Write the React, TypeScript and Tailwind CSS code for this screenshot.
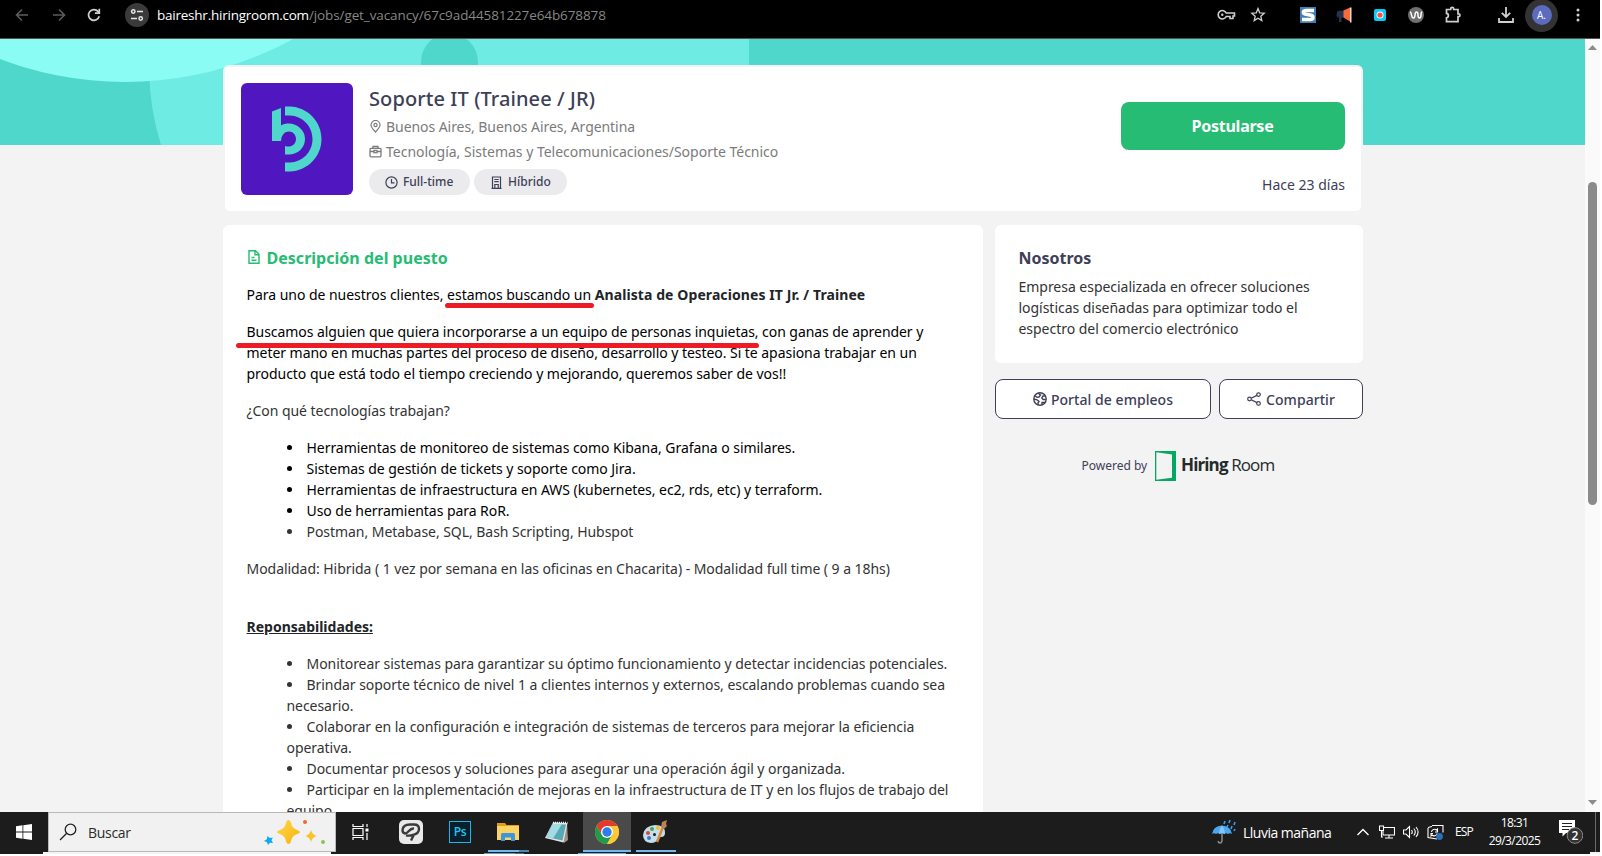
import React from "react";

function Toolbar() {
  return (
    <header className="flex h-[39px] items-start border-b border-[#5a4f4e] bg-black pt-[3px] font-['Open_Sans','Noto_Sans',sans-serif]">
      <div className="flex h-6 w-[620px] items-center pl-[14px]">
        <svg className="h-4 w-4 shrink-0" viewBox="0 0 16 16" fill="none" stroke="#5c5c5c" strokeWidth="1.6"><path d="M14 8H3M8 2.5 2.5 8 8 13.5" /></svg>
        <svg className="ml-[21px] h-4 w-4 shrink-0" viewBox="0 0 16 16" fill="none" stroke="#5c5c5c" strokeWidth="1.6"><path d="M2 8h11M8 2.5 13.500 8 8 13.500" /></svg>
        <svg className="ml-[19px] h-4 w-4 shrink-0" viewBox="0 0 16 16" fill="none" stroke="#d0d0d0" strokeWidth="1.7"><path d="M13.200 9.200A5.400 5.400 0 1 1 12 4.400l1 1.200" /><path d="M13.300 1.800v4.400H8.900" /></svg>
        <span className="ml-[23px] flex h-6 w-6 shrink-0 items-center justify-center rounded-full bg-[#3a3a3a]">
          <svg className="h-[14px] w-[14px]" viewBox="0 0 14 14" fill="none" stroke="#e6e6e6" strokeWidth="1.5"><circle cx="3.300" cy="3.500" r="1.700" /><path d="M7 3.500h6M1 10.500h6" /><circle cx="10.700" cy="10.500" r="1.700" /></svg>
        </span>
        <span className="ml-2 whitespace-nowrap text-[13.5px] leading-6 tracking-[-0.1px] text-[#868686]">
          <span className="tracking-[-0.23px] text-white">baireshr.hiringroom.com</span>/jobs/get_vacancy/67c9ad44581227e64b678878
        </span>
      </div>
      <div className="ml-auto flex h-6 items-center pr-[14px]">
        <svg className="mr-[14px] h-[12px] w-[19px]" viewBox="0 0 19 12" fill="none" stroke="#cfcfcf" strokeWidth="1.600"><path d="M9.200 4H17.500v3H16v2.500h-3V7.500H9.200A4.200 4.200 0 1 1 9.200 4Z" /><circle cx="5.300" cy="5.800" r="1.200" fill="#cfcfcf" stroke="none" /></svg>
        <svg className="mr-[34px] h-[16px] w-[16px]" viewBox="0 0 16 16" fill="none" stroke="#cfcfcf" strokeWidth="1.300"><path d="m8 1.600 1.700 4.200 4.500.4-3.400 3 1 4.400L8 11.300l-3.800 2.300 1-4.400-3.400-3 4.500-.4Z" /></svg>
        <svg className="mr-[20px] h-4 w-4" viewBox="0 0 16 16"><path fill="#3f7fb5" d="M0 0h16v16H0z" /><path d="M14 3.500H6.500Q3.300 3.500 3.300 5.300 3.300 7 6 7.400l4 .6q3 .4 3 2.400 0 2.100-3 2.100H2" fill="none" stroke="#fff" strokeWidth="3.400" /></svg>
        <svg className="mr-[22px] h-4 w-[16px]" viewBox="0 0 16 16"><path fill="#24344e" d="M1 5q0-1 2-1.200L8 3.500v7l-2.500.2V15H3v-4.500Q.5 10.500.5 8Z" /><path fill="#f96a3b" d="m7.500 3.500 6.500-3v14l-6.500-4Z" /><path fill="#e9ddd6" d="M14 .5h1.500v15H14z" /></svg>
        <svg className="mr-[22px] h-3 w-3" viewBox="0 0 12 12"><rect width="12" height="12" rx="2" fill="#08c9f7" /><circle cx="6" cy="6" r="3.500" fill="#fff" /><circle cx="6" cy="6" r="2.600" fill="#fb4f3f" /></svg>
        <svg className="mr-[20px] h-4 w-4" viewBox="0 0 16 16"><circle cx="8" cy="8" r="8" fill="#6f6f6f" /><path d="M2 5q1 0 1.500 3t2 3q1.300 0 1.500-3t1.500-3Q10 5 10 8t1.500 3q1.500 0 1.500-3t1.200-3" fill="none" stroke="#fff" strokeWidth="1.500" /></svg>
        <svg className="mr-[36px] h-[18px] w-[18px]" viewBox="0 0 18 18" fill="none" stroke="#cfcfcf" strokeWidth="1.700"><path d="M2.500 3.500h4.200v-.6a1.500 1.500 0 0 1 3 0v.6h4.300v4.300h.6a1.400 1.400 0 0 1 0 2.800H14v5H2.500v-3.800c2.500-.2 2.500-4.200 0-4.400Z" /></svg>
        <svg className="mr-[11px] h-4 w-4" viewBox="0 0 16 16" fill="none" stroke="#cfcfcf" strokeWidth="1.800"><path d="M8 0v9.500M3.800 5.800 8 10l4.200-4.200M1 11v4h14v-4" /></svg>
        <span className="-my-3 mr-[12px] flex h-[33px] w-[33px] items-center justify-center rounded-full bg-[#333333]">
          <span className="flex h-5 w-5 items-center justify-center rounded-full bg-[#5c6bc0] text-[10px] text-white">A.</span>
        </span>
        <svg className="h-4 w-4" viewBox="0 0 16 16" fill="#cfcfcf"><circle cx="8" cy="3" r="1.500" /><circle cx="8" cy="8" r="1.500" /><circle cx="8" cy="13" r="1.500" /></svg>
      </div>
    </header>
  );
}

function Banner() {
  return (
    <svg className="block h-[106px] w-[1585px]" viewBox="0 39 1585 106">
      <path fill="#50d7cc" d="M0 39h1585v106H0z" />
      <path fill="#6eece4" d="M149 39h600v106H161Q150 110 149 70Z" />
      <circle cx="449.500" cy="62" r="28.500" fill="#50d7cc" />
      <path fill="#50d7cc" d="M421 62h57v40h-57z" />
      <circle cx="125" cy="-268" r="350" fill="#8afcf4" />
    </svg>
  );
}

function Company() {
  return (
    <svg className="h-28 w-28 rounded-md" viewBox="0 0 112 112">
      <path fill="#5017c0" d="M0 0h112v112H0z" />
      <g fill="#50d7cc">
        <path d="M44 23.500h5C66 24 80.500 38 80.500 56S66 88 49 88.500h-5v-9h5c12-.5 22.500-10 22.500-23.500S61 33 49 32.500h-5Z" />
        <path d="M31 28.500 40 25v17.500C42 41 45 40.500 48 40.500c8 0 16 6.500 16 15.500S56.500 71.500 48 71.500h-4v-8.500c6 2 11-1.500 11-7 0-4-3-7.500-7-7.500s-7.500 3-8 9.500h-9Z" />
      </g>
    </svg>
  );
}

function JobHeader() {
  return (
    <section className="flex h-[146px] w-[1140px] rounded-md border-2 border-b-0 border-[#f3f3f3] bg-white pl-4 pt-4">
      <Company />
      <div className="ml-4 whitespace-nowrap text-sm text-[#7b7b7b]">
        <h1 className="mt-[2px] h-[27px] text-[20px] font-medium leading-[27px] tracking-[0.09px] text-[#3d4057]">Soporte IT (Trainee / JR)</h1>
        <p className="mt-[2px] flex h-[25px] items-center tracking-[-0.06px]">
          <svg className="-mt-px mr-1 h-[13px] w-[13px]" viewBox="0 0 13 13" fill="none" stroke="#7b7b7b" strokeWidth="1.200"><path d="M6.500 12C3.500 8.800 2 7 2 5a4.500 4.500 0 0 1 9 0c0 2-1.500 3.800-4.500 7Z" /><circle cx="6.500" cy="5" r="1.600" /></svg>
          Buenos Aires, Buenos Aires, Argentina
        </p>
        <p className="flex h-[25px] items-center tracking-[-0.01px]">
          <svg className="-mt-px mr-1 h-[13px] w-[13px]" viewBox="0 0 13 13" fill="none" stroke="#7b7b7b" strokeWidth="1.300"><rect x="1" y="3.300" width="11" height="8.500" rx="1" /><path d="M4 3.300V1.500h5v1.800M1 6.500h4M8 6.500h4" /><rect x="5" y="5.500" width="3" height="2.200" /></svg>
          Tecnología, Sistemas y Telecomunicaciones/Soporte Técnico
        </p>
        <div className="mt-[5px] flex gap-1 text-xs font-medium text-[#3d4057]">
          <span className="flex h-[26px] w-[101px] items-center rounded-full bg-[#ebebed] pl-4">
            <svg className="mr-[5px] h-[13px] w-[13px]" viewBox="0 0 13 13" fill="none" stroke="#3d4057" strokeWidth="1.200"><circle cx="6.500" cy="6.500" r="5.600" /><path d="M6.500 3v3.800h3" /></svg>
            Full-time
          </span>
          <span className="flex h-[26px] w-[93px] items-center rounded-full bg-[#ebebed] pl-4">
            <svg className="mr-[5px] h-[13px] w-[13px]" viewBox="0 0 13 13" fill="none" stroke="#3d4057" strokeWidth="1.200"><path d="M1.500 12.300h10M2.500 12V1h8v11M4.300 3.500h4.400M4.300 5.700h4.400M4.800 12V8.500h3.400V12" /></svg>
            Híbrido
          </span>
        </div>
      </div>
      <div className="ml-auto flex flex-col items-end pr-4 pt-[19px]">
        <button className="h-12 w-56 rounded-lg bg-[#26bc73] pr-px text-base font-bold tracking-[-0.25px] text-white">Postularse</button>
        <span className="mt-6 text-sm leading-[21px] text-[#3d4057]">Hace 23 días</span>
      </div>
    </section>
  );
}

const tools = [
  "Herramientas de monitoreo de sistemas como Kibana, Grafana o similares.",
  "Sistemas de gestión de tickets y soporte como Jira.",
  "Herramientas de infraestructura en AWS (kubernetes, ec2, rds, etc) y terraform.",
  "Uso de herramientas para RoR.",
];

const duties = [
  ["Monitorear sistemas para garantizar su óptimo funcionamiento y detectar incidencias potenciales."],
  ["Brindar soporte técnico de nivel 1 a clientes internos y externos, escalando problemas cuando sea", "necesario."],
  ["Colaborar en la configuración e integración de sistemas de terceros para mejorar la eficiencia", "operativa."],
  ["Documentar procesos y soluciones para asegurar una operación ágil y organizada."],
  ["Participar en la implementación de mejoras en la infraestructura de IT y en los flujos de trabajo del", "equipo."],
];

function Description() {
  return (
    <section className="relative h-[640px] w-[760px] rounded-md bg-white pl-[23.5px] pt-[22px] text-sm leading-[21px] tracking-[-0.05px] text-[#333333]">
      <h2 className="flex h-[21px] items-center text-base font-bold tracking-[0.02px] text-[#26bc73]">
        <svg className="-mt-[2px] mr-[6px] h-[14px] w-[14px]" viewBox="0 0 14 14" fill="none" stroke="#26bc73" strokeWidth="1.400"><path d="M2 .8h6.500L12 4.300v9H2ZM8 1v3.800h4M4.500 7.500h3M4.500 10.300h5" /></svg>
        Descripción del puesto
      </h2>
      <div className="mt-4 flex flex-col gap-4 whitespace-nowrap">
        <p className="tracking-[-0.035px] text-black">Para uno de nuestros clientes, estamos buscando un <b className="font-bold tracking-[0.09px] text-[#212529]">Analista de Operaciones IT Jr. / Trainee</b></p>
        <p className="tracking-[-0.045px] text-black">
          <span className="tracking-[-0.06px]">Buscamos alguien que quiera incorporarse a un equipo de personas inquietas, con ganas de aprender y</span><br />
          meter mano en muchas partes del proceso de diseño, desarrollo y testeo. Si te apasiona trabajar en un<br />
          <span className="tracking-[-0.035px]">producto que está todo el tiempo creciendo y mejorando, queremos saber de vos!!</span>
        </p>
        <p>¿Con qué tecnologías trabajan?</p>
        <ul className="list-inside list-disc pl-10">
          {tools.map((t) => <li key={t} className="text-black">{t}</li>)}
          <li>Postman, Metabase, SQL, Bash Scripting, Hubspot</li>
        </ul>
        <p>Modalidad: Hibrida ( 1 vez por semana en las oficinas en Chacarita) - Modalidad full time ( 9 a 18hs)</p>
        <p className="mt-[21px] font-bold tracking-normal text-[#212529] underline">Reponsabilidades:</p>
        <ul className="list-inside list-disc pl-10">
          {duties.map(([first, rest]) => <li key={first}>{first}{rest && <><br />{rest}</>}</li>)}
        </ul>
      </div>
      <span className="absolute left-[222px] top-[78px] h-[5px] w-[149px] rounded-full bg-[#ed1c24]" />
      <span className="absolute left-[13px] top-[118px] h-[5px] w-[523px] rounded-full bg-[#ed1c24]" />
    </section>
  );
}

function Sidebar() {
  return (
    <aside className="w-[368px] text-[#3d4057]">
      <section className="h-[138px] rounded-md bg-white pl-[23.5px] pt-[23px]">
        <h2 className="text-base font-bold leading-[21px] tracking-[-0.02px]">Nosotros</h2>
        <p className="mt-[7px] whitespace-nowrap text-sm leading-[21px] tracking-[-0.03px] text-[#333333]">
          Empresa especializada en ofrecer soluciones<br />logísticas diseñadas para optimizar todo el<br />espectro del comercio electrónico
        </p>
      </section>
      <div className="mt-4 flex gap-2 text-sm font-medium">
        <button className="flex h-10 w-[216px] items-center justify-center rounded-lg border border-[#3d4057] bg-white pt-px tracking-[0.05px]">
          <svg className="mr-[4px] h-[14px] w-[14px] -translate-y-px" viewBox="0 0 14 14" fill="none" stroke="#3d4057" strokeWidth="1.400"><circle cx="7" cy="7" r="6.200" /><path d="M1.800 3.500 4 5.200l2-.2 1.500-2L5.500 1.500M1 7l3 .8L6 9.500 5 11v2M12.500 4H10L8.800 6l1.400 1.500h2.600M9 13v-2.500h3.500" /></svg>
          Portal de empleos
        </button>
        <button className="flex h-10 w-36 items-center justify-center rounded-lg border border-[#3d4057] bg-white pt-px tracking-[0.05px]">
          <svg className="mr-[5px] h-[14px] w-[14px] -translate-y-px" viewBox="0 0 14 14" fill="none" stroke="#3d4057" strokeWidth="1.200"><circle cx="2.500" cy="7" r="1.800" /><circle cx="11.500" cy="2.600" r="1.800" /><circle cx="11.500" cy="11.400" r="1.800" /><path d="m4.200 6.200 5.700-2.800M4.200 7.800l5.700 2.800" /></svg>
          Compartir
        </button>
      </div>
      <div className="mt-8 flex h-[30px] items-center pl-[86.5px]">
        <span className="w-[66.5px] whitespace-nowrap text-xs">Powered by</span>
        <svg className="ml-[7px] h-[30px] w-[21px]" viewBox="0 0 21 30"><path fill="#05a862" d="M0 0h21v30H0z" /><path fill="#f3f3f3" d="M1.300 1.300 17 3.500v23.300L1.300 28.700Z" /></svg>
        <span className="-mt-[2px] ml-[5px] whitespace-nowrap font-['Open_Sans','Noto_Sans',sans-serif] text-[17px] tracking-[-0.88px] text-[#232b2b]"><b>Hiring</b> Room</span>
      </div>
    </aside>
  );
}

function Scrollbar() {
  return (
    <div className="flex w-[15px] flex-col items-center bg-[#fafafa] pt-[6px]">
      <svg className="h-[5px] w-[9px]" viewBox="0 0 9 5"><path fill="#8b8b8b" d="M4.500 0 9 5H0Z" /></svg>
      <span className="mt-[132px] h-[323px] w-[9px] rounded-full bg-[#8b8b8b]" />
      <svg className="mb-[7px] mt-auto h-[5px] w-[9px]" viewBox="0 0 9 5"><path fill="#8b8b8b" d="M4.500 5 9 0H0Z" /></svg>
    </div>
  );
}

function Taskbar() {
  return (
    <footer className="h-[42px] bg-[#1c1c1c] font-['Open_Sans','Noto_Sans',sans-serif]">
      <div className="flex h-10">
        <div className="flex w-12 items-center pl-4">
          <svg className="h-4 w-4" viewBox="0 0 16 16" fill="#fff"><path d="M0 2.200 6.500 1.300v6.300H0ZM7.300 1.200 16 0v7.600H7.300ZM0 8.400h6.500v6.300L0 13.800ZM7.300 8.400H16V16l-8.700-1.200Z" /></svg>
        </div>
        <div className="flex w-72 items-center border border-[#b9b9b9] bg-[#f1f1f1] pl-[10px] text-[#2b2b2b]">
          <svg className="h-[18px] w-[18px]" viewBox="0 0 18 18" fill="none" stroke="#222" strokeWidth="1.300"><circle cx="11.500" cy="6.500" r="5.300" /><path d="m7.700 10.300-6.700 6.700" /></svg>
          <span className="ml-[11px] text-[14px] tracking-[-0.3px]">Buscar</span>
          <svg className="ml-auto mr-[9px] h-[26px] w-[62px]" viewBox="0 0 62 26">
            <defs><linearGradient id="spark" x1="0" y1="0" x2="1" y2="1"><stop stopColor="#ffd84a" /><stop offset="1" stopColor="#f5b30c" /></linearGradient></defs>
            <path fill="url(#spark)" d="M24.500 1q2 0 2.700 3.500 1 4.500 4.800 6 4 1.500 4 2.500t-4 2.500q-3.800 1.500-4.800 6-.7 3.500-2.700 3.500t-2.700-3.500q-1-4.500-4.800-6-4-1.500-4-2.500t4-2.500q3.800-1.500 4.800-6Q22.500 1 24.500 1Z" />
            <path fill="#f9c228" d="M47 11q1 4.500 5.500 6-4.500 1.500-5.500 6-1-4.500-5.500-6 4.500-1.500 5.500-6Z" />
            <path fill="#11a8ee" d="m3.500 17 2.300 2 3-.5-1.300 2.800 1.500 2.700-3-.2L4 26l-1-2.800L0 22l2.800-1.800Z" />
            <circle cx="41" cy="3" r="2" fill="#ef6a2e" /><circle cx="59" cy="23" r="2" fill="#8bc84a" />
          </svg>
        </div>
        <div className="flex w-12 items-center pl-4">
          <svg className="h-4 w-[17px]" viewBox="0 0 17 16" fill="none" stroke="#fff" strokeWidth="1.200"><path d="M1 4.500h10v7H1ZM1 0v2.500h10V0M1 16v-2.500h10V16M15 0v3M15 9v7" /><path d="M13.500 4.500h3v3h-3z" fill="#fff" stroke="none" /></svg>
        </div>
        <div className="flex w-[47px] items-center pl-[15px]">
          <svg className="h-6 w-6" viewBox="0 0 24 24"><rect width="24" height="24" rx="5" fill="#e9e9e9" /><path d="M15 8.500C10 8 9 14 6 13.500Q3.500 13 3.500 10 4 4.500 11 4.500h4q5 0 5 4.500t-6 6q-4 1-7 .3M15 14.500 12 20.500" fill="none" stroke="#3a3a3a" strokeWidth="2.400" /></svg>
        </div>
        <div className="flex w-[57px] items-center pb-px pl-[18px]">
          <span className="flex h-[22px] w-[22px] items-center justify-center border border-[#19b4ea] bg-[#06202c] text-[12px] font-semibold tracking-[-0.3px] text-[#25c3f5]">Ps</span>
        </div>
        <div className="mr-[4px] flex h-10 w-[41px] flex-col justify-between">
          <svg className="ml-[9px] mt-[10px] h-[19px] w-[22px]" viewBox="0 0 22 19"><path fill="#e0a10c" d="M0 1h8l1.500 2H22v5H0Z" /><path fill="#fcd462" d="M0 4h22v14H0z" /><path fill="#3f95dd" d="M4 19v-6.500Q4 11 5.500 11h11q1.500 0 1.500 1.500V19h-4v-3.500H8V19Z" /></svg>
          <span className="flex h-[2px]"><i className="w-[31px] bg-[#76b9ed]" /><i className="w-[10px] bg-[#5085ad]" /></span>
        </div>
        <div className="mr-[2px] flex w-[48px] items-center justify-center">
          <svg className="h-[23px] w-6" viewBox="0 0 24 23"><path fill="#9c9184" d="M8 1.500 22 2l1 17-4 3Z" /><path fill="#e6e4de" d="M8 1.500 22.500 2l-4 19.500L0 17Z" /><path fill="#57a9b8" d="M7.500 3 21 3.500l-3.500 16L1.500 16Z" /><path stroke="#eef" strokeWidth="1.500" strokeDasharray="1 1" d="M8 1.500h14.500" /><path fill="#a3dbe4" d="M7.500 3H17L8 17.500 1.500 16Z" /></svg>
        </div>
        <div className="flex w-12 flex-col justify-between bg-[#4a4a4a]">
          <svg className="ml-3 mt-2 h-6 w-6" viewBox="0 0 24 24"><circle cx="12" cy="12" r="12" fill="#fcc934" /><path fill="#e33b2e" d="M12 6h10.400A12 12 0 0 0 1.600 6l5.200 9Z" /><path fill="#1e9b4c" d="M1.600 6A12 12 0 0 0 12 24l5.200-9H6.800Z" /><path fill="#fcc934" d="M12 6h10.400A12 12 0 0 1 12 24l5.200-9Z" /><circle cx="12" cy="12" r="6" fill="#fff" /><circle cx="12" cy="12" r="4.700" fill="#2f7de9" /></svg>
          <span className="h-[2px] bg-[#76b9ed]" />
        </div>
        <div className="ml-[5px] flex w-10 flex-col justify-between">
          <svg className="ml-[7px] mt-2 h-6 w-[26px]" viewBox="0 0 26 24"><path fill="#c5deec" d="M12 5q10 0 10 8 0 4-4 4-2 0-3 2-2 4-7 4-8-1-8-8Q1 6 12 5Z" /><circle cx="5" cy="13" r="2" fill="#d9483b" /><circle cx="9" cy="9" r="2" fill="#4aa54a" /><circle cx="15" cy="8" r="2" fill="#f0c22e" /><circle cx="6" cy="18" r="2" fill="#3b76c4" /><circle cx="11.500" cy="14.500" r="1.500" fill="#1c1c1c" /><path d="m14 22 6-15" stroke="#d98a3d" strokeWidth="2.500" /><path fill="#b98455" d="m18 7 1-5 5-2-1 4 1 2-3 3Z" /></svg>
          <span className="h-[2px] bg-[#76b9ed]" />
        </div>
        <div className="ml-auto flex items-center text-white">
          <svg className="h-6 w-6" viewBox="0 0 24 24"><path fill="#4ba7ee" d="M0 14Q1 6 10 5.500 19 6 20 14q-2-1.500-4 0-2-1.500-3.500 0-2.500-1.500-5 0-1.500-1.500-3.500 0-2-1.500-4 0Z" /><path fill="#83c5f7" d="M7 14Q7.500 8 10 5.500 12.500 8 13 14q-3-1.500-6 0Z" /><path d="M10 13v8q-.5 2-2 2t-2-2" fill="none" stroke="#8b8b8b" strokeWidth="1.500" /><path d="m13 1-1 3M18 0l-1 3M23 2l-1 3M16 5l-1 2M20 6l-1 3M23 9l-1 2" stroke="#3f9be8" strokeWidth="1.600" /></svg>
          <span className="ml-[7px] w-[89px] whitespace-nowrap text-[14px] tracking-[-0.5px]">Lluvia mañana</span>
          <svg className="ml-[25px] h-[8px] w-[12px]" viewBox="0 0 12 8" fill="none" stroke="#fff" strokeWidth="1.400"><path d="m.5 7 5.500-5.500L11.500 7" /></svg>
          <svg className="ml-[10px] h-[14px] w-4" viewBox="0 0 16 14" fill="none" stroke="#fff" strokeWidth="1.100"><path d="M5 2.500h10.500v7.500H4V6M10 10v3M6 13h8M.5 1h4v4.500h-4zM2.500 5.500V12H4" /></svg>
          <svg className="ml-[8px] h-[14px] w-4" viewBox="0 0 16 14" fill="none" stroke="#fff" strokeWidth="1.100"><path d="M.5 5H3l3.500-3.500v11L3 9H.5ZM8.500 5q1.500 2 0 4M10.800 3.500q3 3.500 0 7M13 2q4.200 5 0 10" /></svg>
          <svg className="ml-[8px] h-4 w-[17px]" viewBox="0 0 17 16" fill="none" stroke="#fff" strokeWidth="1.100"><path d="M5 1.500h11v7M1 4v9.500l9 1.500M1 3.500 5 2.500" /><path d="M4.500 8a3 3 0 0 1 5-2l1-1v3H8M10 9.500a3 3 0 0 1-5 1.500l-1 1V9.500h2" /><circle cx="12.500" cy="12.500" r="3.400" fill="#2671bf" stroke="none" /></svg>
          <span className="ml-[11px] w-[19px] text-[12px] tracking-[-0.9px]">ESP</span>
          <span className="ml-[9px] w-[63px] whitespace-nowrap text-center text-[12px] leading-[18px] tracking-[-0.6px]">18:31<br />29/3/2025</span>
          <div className="relative ml-[13px] h-6 w-6">
            <svg className="h-6 w-6" viewBox="0 0 24 24"><path fill="#fff" d="M0 0h16v13H7l-3.500 3.500V13H0Z" /><path d="M3 3.500h10M3 6.500h10M3 9.500h7" stroke="#222" /><circle cx="16" cy="15.500" r="7.800" fill="#333" stroke="#888" /></svg>
            <span className="absolute left-[8px] top-[8px] w-4 text-center text-[12px] font-semibold leading-[15px]">2</span>
          </div>
          <span className="ml-[12px] mr-[4px] h-10 w-px bg-[#6b6b6b]" />
        </div>
      </div>
      <div className="flex h-[2px]">
        <i className="ml-[43px] w-[288px] bg-[#f4f4f4]" />
        <i className="ml-[153px] mt-px w-[31px] bg-[#5f9ac8]" /><i className="mt-px w-[9px] bg-[#44708f]" />
        <i className="ml-[54px] mt-px w-[48px] bg-[#6fafe0]" />
        <i className="ml-auto w-[10px] bg-[#f4f4f4]" />
      </div>
    </footer>
  );
}

export default function App() {
  return (
    <div className="h-[856px] w-[1602px] overflow-hidden bg-white font-['Noto_Sans','Open_Sans',sans-serif]">
      <div className="flex h-[854px] w-[1600px] flex-col overflow-hidden">
        <Toolbar />
        <div className="flex h-[773px] shrink-0">
          <main className="h-[773px] w-[1585px] overflow-hidden bg-[#f3f3f3]">
            <Banner />
            <div className="relative -mt-20 ml-[223px] w-[1140px]">
              <JobHeader />
              <div className="mt-[14px] flex gap-3">
                <Description />
                <Sidebar />
              </div>
            </div>
          </main>
          <Scrollbar />
        </div>
        <Taskbar />
      </div>
    </div>
  );
}
